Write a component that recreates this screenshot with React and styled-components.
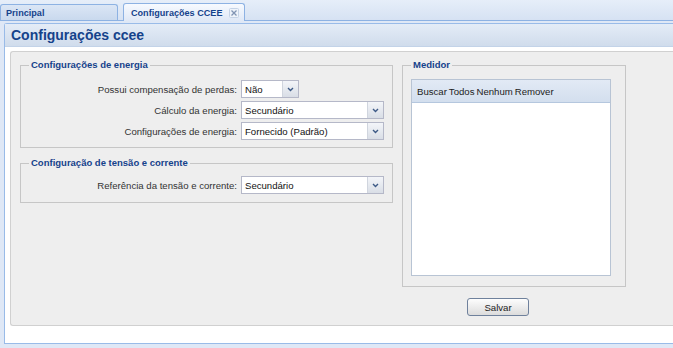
import React from 'react';
import styled, { createGlobalStyle } from 'styled-components';

const GlobalStyle = createGlobalStyle`
  html, body {
    margin: 0;
    padding: 0;
    background: #dfe8f6;
    overflow: hidden;
  }
  body {
    font-family: 'Liberation Sans', Arial, sans-serif;
    font-size: 9.6px;
    color: #222;
  }
`;

const Viewport = styled.div`
  width: 673px;
  height: 348px;
  display: flex;
  flex-direction: column;
  background: #dfe8f6;
  overflow: hidden;
`;

const TabStrip = styled.div`
  height: 20px;
  flex: none;
  display: flex;
  align-items: flex-end;
  gap: 5px;
  background: linear-gradient(#e6eef9, #d6e2f3);
  border-bottom: 1px solid #8db2e3;
`;

const Tab = styled.div`
  box-sizing: border-box;
  width: ${({ w }) => w}px;
  height: ${({ active }) => (active ? 18 : 16)}px;
  margin-bottom: ${({ active }) => (active ? -1 : 0)}px;
  padding-left: ${({ active }) => (active ? 7 : 5)}px;
  padding-right: 5px;
  display: flex;
  align-items: center;
  justify-content: space-between;
  border: 1px solid #8db2e3;
  border-bottom: none;
  border-radius: 3px 3px 0 0;
  background: ${({ active }) =>
    active ? 'linear-gradient(#f7faff, #dfe8f6)' : 'linear-gradient(#dbe6f5, #c9d9ee)'};
  font-weight: bold;
  font-size: 9.1px;
  color: #15428b;
`;

const Spacer = styled.div`
  height: 2px;
  flex: none;
`;

const Panel = styled.div`
  margin-left: 4px;
  height: 319px;
  flex: none;
  display: flex;
  flex-direction: column;
  border: 1px solid #99bbe8;
  border-right: none;
  border-radius: 3px 0 0 0;
  background: #fff;
`;

const PanelHeader = styled.div`
  height: 22px;
  flex: none;
  display: flex;
  align-items: center;
  padding-left: 6px;
  background: linear-gradient(#e4ecf7, #d0dcec);
  border-bottom: 1px solid #c3d3e8;
  font-weight: bold;
  font-size: 14px;
  color: #15428b;
`;

const PanelBody = styled.div`
  flex: 1;
  padding: 4px 0 17px 5px;
  display: flex;
`;

const FormBox = styled.div`
  flex: 1;
  display: flex;
  gap: 9px;
  padding: 7px 0 0 9px;
  background: #eeeeee;
  border: 1px solid #d0d0d0;
  border-right: none;
  border-radius: 3px 0 0 3px;
`;

const Column = styled.div`
  display: flex;
  flex-direction: column;
  align-items: flex-start;
`;

const FieldSet = styled.fieldset`
  box-sizing: border-box;
  width: ${({ w }) => w}px;
  margin: ${({ top }) => top || 0}px 0 0 0;
  padding: ${({ pad }) => pad};
  border: 1px solid #c6c6c6;
  min-width: 0;
`;

const Legend = styled.legend`
  margin-left: 8px;
  padding: 0 2px;
  line-height: 12px;
  font-weight: bold;
  font-size: 9.5px;
  color: #15428b;
`;

const Rows = styled.div`
  display: flex;
  flex-direction: column;
  gap: 3px;
`;

const Row = styled.div`
  display: flex;
  align-items: center;
  gap: 4px;
`;

const Label = styled.label`
  width: 216px;
  text-align: right;
  color: #333;
`;

const Select = styled.div`
  box-sizing: border-box;
  width: ${({ w }) => w}px;
  height: 18px;
  display: flex;
  border: 1px solid #b5b8c8;
  background: #fff;
`;

const SelectValue = styled.div`
  flex: 1;
  padding-left: 3px;
  display: flex;
  align-items: center;
  color: #111;
`;

const Trigger = styled.div`
  width: 15px;
  display: flex;
  align-items: center;
  justify-content: center;
  background: linear-gradient(#f3f5f9, #d9dee6);
  border-left: 1px solid #d0d5de;
`;

const Grid = styled.div`
  box-sizing: border-box;
  width: 200px;
  height: 197px;
  margin-left: 8px;
  border: 1px solid #b8c4d4;
  background: #fff;
`;

const GridToolbar = styled.div`
  height: 22px;
  display: flex;
  align-items: center;
  gap: 2px;
  padding-left: 5px;
  background: linear-gradient(#e2eaf5, #d3dfee);
  border-bottom: 1px solid #b5c7de;
  color: #222;
`;

const Button = styled.button`
  box-sizing: border-box;
  width: 62px;
  height: 18px;
  margin: 11px 0 0 65px;
  padding: 0;
  border: 1px solid #6f819c;
  border-radius: 3px;
  background: linear-gradient(#fdfdfd, #dcdcdc);
  font-family: 'Liberation Sans', Arial, sans-serif;
  font-size: 9.6px;
  color: #222;
`;

const Chevron = () => (
  <svg width="7" height="5" viewBox="0 0 7 5">
    <polyline points="1,1 3.5,3.5 6,1" fill="none" stroke="#3d5a86" strokeWidth="1.4" />
  </svg>
);

const CloseIcon = () => (
  <svg width="10" height="10" viewBox="0 0 10 10">
    <rect x="0.5" y="0.5" width="9" height="9" rx="1" fill="#eef3fa" stroke="#c5d3e6" />
    <path d="M2.5 2.5 L7.5 7.5 M7.5 2.5 L2.5 7.5" stroke="#8194b3" strokeWidth="1.3" />
  </svg>
);

const Combo = ({ w, value }) => (
  <Select w={w}>
    <SelectValue>{value}</SelectValue>
    <Trigger>
      <Chevron />
    </Trigger>
  </Select>
);

export default function App() {
  return (
    <Viewport>
      <GlobalStyle />
      <TabStrip>
        <Tab w={118}>Principal</Tab>
        <Tab w={122} active>
          Configurações CCEE
          <CloseIcon />
        </Tab>
      </TabStrip>
      <Spacer />
      <Panel>
        <PanelHeader>Configurações ccee</PanelHeader>
        <PanelBody>
          <FormBox>
            <Column>
              <FieldSet w={373} pad="9px 0 7px 0">
                <Legend>Configurações de energia</Legend>
                <Rows>
                  <Row>
                    <Label>Possui compensação de perdas:</Label>
                    <Combo w={58} value="Não" />
                  </Row>
                  <Row>
                    <Label>Cálculo da energia:</Label>
                    <Combo w={143} value="Secundário" />
                  </Row>
                  <Row>
                    <Label>Configurações de energia:</Label>
                    <Combo w={143} value="Fornecido (Padrão)" />
                  </Row>
                </Rows>
              </FieldSet>
              <FieldSet w={373} top={9} pad="7px 0 8px 0">
                <Legend>Configuração de tensão e corrente</Legend>
                <Row>
                  <Label>Referência da tensão e corrente:</Label>
                  <Combo w={143} value="Secundário" />
                </Row>
              </FieldSet>
            </Column>
            <Column>
              <FieldSet w={224} pad="8px 0 10px 0">
                <Legend>Medidor</Legend>
                <Grid>
                  <GridToolbar>
                    <span>Buscar</span>
                    <span>Todos</span>
                    <span>Nenhum</span>
                    <span>Remover</span>
                  </GridToolbar>
                </Grid>
              </FieldSet>
              <Button>Salvar</Button>
            </Column>
          </FormBox>
        </PanelBody>
      </Panel>
    </Viewport>
  );
}
